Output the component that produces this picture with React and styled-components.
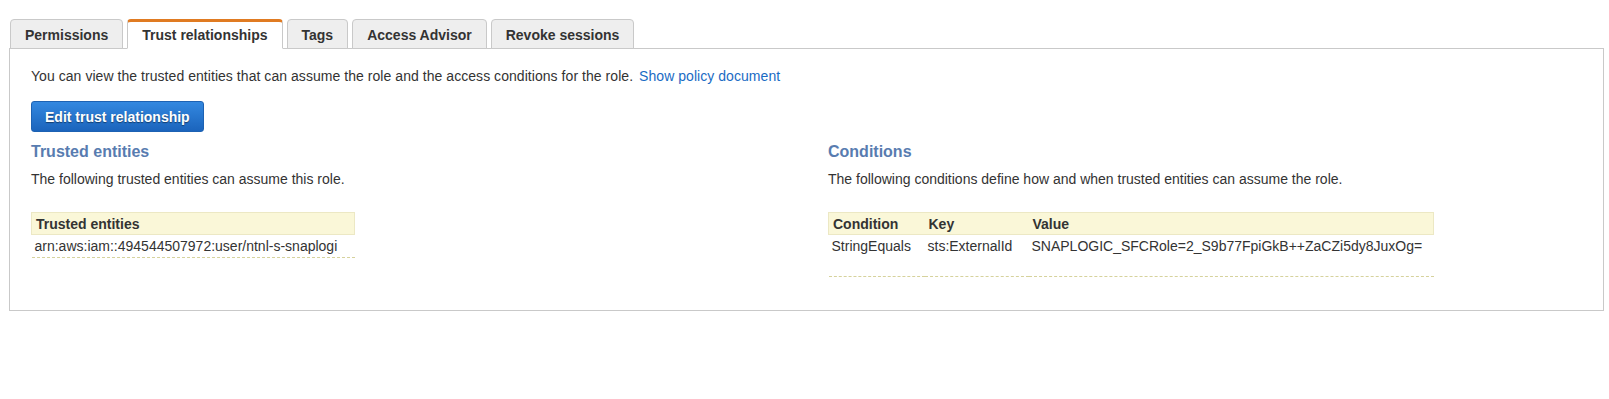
import React from 'react';
import styled, { createGlobalStyle } from 'styled-components';

const Global = createGlobalStyle`
  body {
    margin: 0;
    background: #fff;
    font-family: "Liberation Sans", Arial, Helvetica, sans-serif;
    font-size: 14px;
    color: #333;
  }
`

const Page = styled.div`
  padding: 19px 5px 0 9px;
`

const TabBar = styled.div`
  display: flex;
  gap: 4px;
  padding-left: 1px;
`

const Tab = styled.div`
  position: relative;
  z-index: ${p => (p.$active ? 2 : 1)};
  height: 30px;
  box-sizing: border-box;
  padding: 0 14px;
  padding-top: ${p => (p.$active ? '0' : '2px')};
  display: flex;
  align-items: center;
  font-weight: bold;
  font-size: 14px;
  color: #333;
  background: ${p => (p.$active ? '#fff' : '#eeeeee')};
  border: 1px solid #c9c9c9;
  border-top: ${p => (p.$active ? '3px solid #e07b22' : '1px solid #c9c9c9')};
  border-bottom: ${p => (p.$active ? '1px solid #fff' : '1px solid #c9c9c9')};
  border-radius: 4px 4px 0 0;
  margin-bottom: -1px;
`

const Panel = styled.div`
  border: 1px solid #c9c9c9;
  padding: 18px 21px 0 21px;
  height: 263px;
  box-sizing: border-box;
`

const Intro = styled.p`
  margin: 0;
  line-height: 18px;
  letter-spacing: 0.05px;
`

const Link = styled.a`
  color: #1a6bc4;
  text-decoration: none;
  margin-left: 6px;
`

const EditButton = styled.button`
  margin-top: 16px;
  height: 31px;
  padding: 0 13px;
  border: 1px solid #1d62b3;
  border-radius: 3px;
  background: linear-gradient(#3388e0, #1b64bc);
  color: #fff;
  font-family: inherit;
  font-size: 14px;
  font-weight: bold;
  text-shadow: 0 1px 1px rgba(0, 0, 0, 0.45);
  cursor: pointer;
`

const Columns = styled.div`
  display: grid;
  grid-template-columns: 1fr 1fr;
  column-gap: 43px;
  margin-top: 10px;
`

const Heading = styled.h3`
  margin: 0;
  font-size: 16px;
  line-height: 20px;
  color: #587cb0;
  font-weight: bold;
`

const Desc = styled.p`
  margin: 8px 0 0;
  line-height: 18px;
`

const Table = styled.table`
  margin-top: 24px;
  width: ${p => p.$width}px;
  table-layout: fixed;
  border-collapse: collapse;
  font-size: 14px;
`

const Th = styled.th`
  text-align: left;
  background: #faf7d8;
  border-top: 1px solid #ece8c4;
  border-bottom: 1px solid #ece8c4;
  height: 22px;
  padding: 0 4px;
  font-weight: bold;
  color: #333;
  width: ${p => (p.$w ? `${p.$w}px` : 'auto')};
  box-sizing: border-box;
  &:first-child { border-left: 1px solid #ece8c4; }
  &:last-child { border-right: 1px solid #ece8c4; }
`

const Td = styled.td`
  padding: 3px 3px 0;
  height: ${p => p.$h || 19}px;
  vertical-align: top;
  border-bottom: 1px dashed #d6d29c;
  color: #333;
  white-space: nowrap;
`

export default function App() {
  return (
    <Page>
      <Global />
      <TabBar>
        <Tab>Permissions</Tab>
        <Tab $active>Trust relationships</Tab>
        <Tab>Tags</Tab>
        <Tab>Access Advisor</Tab>
        <Tab>Revoke sessions</Tab>
      </TabBar>
      <Panel>
        <Intro>
          You can view the trusted entities that can assume the role and the access conditions for the role.
          <Link href="#">Show policy document</Link>
        </Intro>
        <EditButton>Edit trust relationship</EditButton>
        <Columns>
          <div>
            <Heading>Trusted entities</Heading>
            <Desc>The following trusted entities can assume this role.</Desc>
            <Table $width={324}>
              <thead>
                <tr><Th>Trusted entities</Th></tr>
              </thead>
              <tbody>
                <tr><Td>arn:aws:iam::494544507972:user/ntnl-s-snaplogi</Td></tr>
              </tbody>
            </Table>
          </div>
          <div>
            <Heading>Conditions</Heading>
            <Desc>The following conditions define how and when trusted entities can assume the role.</Desc>
            <Table $width={606}>
              <thead>
                <tr>
                  <Th $w={96}>Condition</Th>
                  <Th $w={104}>Key</Th>
                  <Th>Value</Th>
                </tr>
              </thead>
              <tbody>
                <tr>
                  <Td $h={38}>StringEquals</Td>
                  <Td $h={38}>sts:ExternalId</Td>
                  <Td $h={38}>SNAPLOGIC_SFCRole=2_S9b77FpiGkB++ZaCZi5dy8JuxOg=</Td>
                </tr>
              </tbody>
            </Table>
          </div>
        </Columns>
      </Panel>
    </Page>
  );
}
